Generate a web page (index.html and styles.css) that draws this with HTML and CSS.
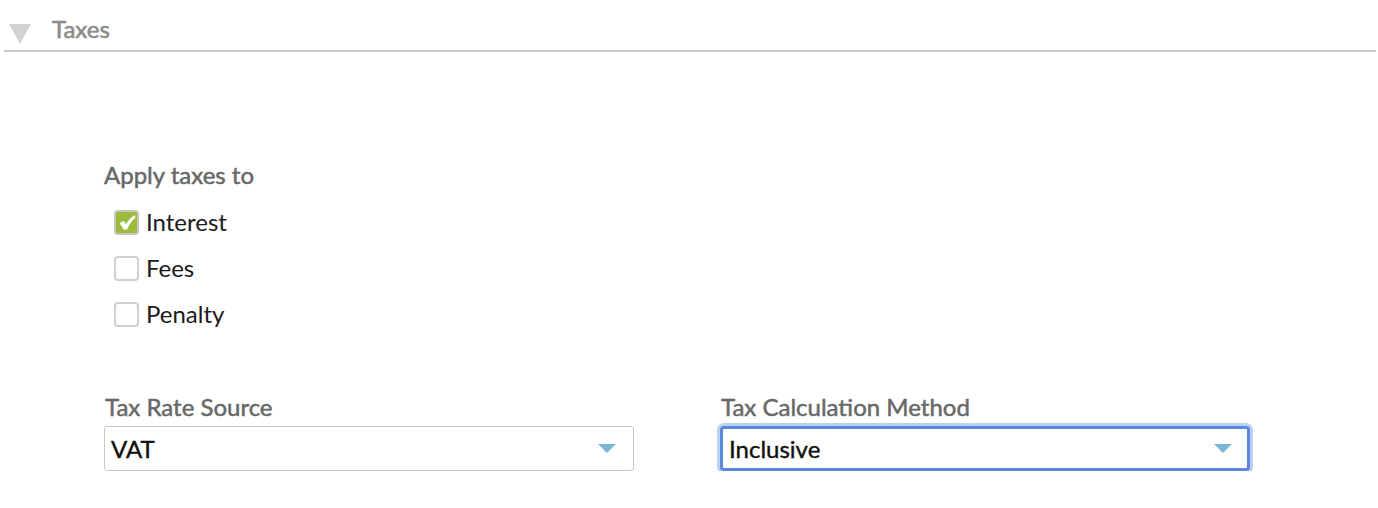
FILE: index.html
```html
<!DOCTYPE html>
<html>
<head>
<meta charset="utf-8">
<link rel="stylesheet" href="styles.css">
</head>
<body>
<div class="section-header">
  <svg class="toggle" width="24" height="22" viewBox="0 0 24 22"><polygon points="1,1 23,1 12,21" fill="#d3d3d3"/></svg>
  <span class="section-title">Taxes</span>
</div>
<div class="section-body">
  <div class="field-label">Apply taxes to</div>
  <div class="checks">
    <label class="check-row">
      <span class="box checked"><svg width="20" height="20" viewBox="0 0 20 20"><path d="M2.5 11 L7 9 L8.8 12.2 Q12 6.5 17.5 3 L18.5 5.5 Q13.5 10 10 17.5 L6.8 17.8 Z" fill="#fff"/></svg></span>
      <span class="check-text">Interest</span>
    </label>
    <label class="check-row">
      <span class="box"></span>
      <span class="check-text">Fees</span>
    </label>
    <label class="check-row">
      <span class="box"></span>
      <span class="check-text">Penalty</span>
    </label>
  </div>
  <div class="selects">
    <div class="select-field">
      <div class="field-label">Tax Rate Source</div>
      <div class="select">
        <span class="select-value">VAT</span>
        <svg class="caret" width="18" height="9" viewBox="0 0 18 9"><polygon points="0,0 18,0 9,9" fill="#7db5d9"/></svg>
      </div>
    </div>
    <div class="select-field">
      <div class="field-label">Tax Calculation Method</div>
      <div class="select focused">
        <span class="select-value">Inclusive</span>
        <svg class="caret" width="18" height="9" viewBox="0 0 18 9"><polygon points="0,0 18,0 9,9" fill="#7db5d9"/></svg>
      </div>
    </div>
  </div>
</div>
</body>
</html>
```

FILE: styles.css
```css
html, body {
  margin: 0;
  padding: 0;
  background: #fff;
}
body {
  font-family: Lato, "Open Sans", sans-serif;
  color: #1a1a1a;
}
.section-header {
  margin: 0 2px 0 4px;
  height: 26px;
  padding: 16px 0 8px 0;
  border-bottom: 2px solid #c9c9c9;
  display: flex;
  align-items: center;
}
.toggle {
  margin-left: 4px;
  margin-top: 10px;
  display: block;
}
.section-title {
  margin-left: 20px;
  font-size: 24px;
  line-height: 26px;
  font-weight: 400;
  color: #8c8c8c;
  -webkit-text-stroke: 0.6px #8c8c8c;
}
.section-body {
  padding: 110px 0 0 104px;
}
.field-label {
  font-size: 24px;
  line-height: 26px;
  color: #686868;
  font-weight: 400;
  -webkit-text-stroke: 0.5px #686868;
}
.checks {
  margin-top: 11px;
  display: flex;
  flex-direction: column;
}
.check-row {
  height: 46px;
  display: flex;
  align-items: center;
  padding-left: 10px;
}
.box {
  box-sizing: border-box;
  width: 25px;
  height: 25px;
  border: 2px solid #cfd1cd;
  border-radius: 4px;
  background: #fff;
  display: flex;
  align-items: center;
  justify-content: center;
}
.box.checked {
  background: #9cbb3d;
  border-color: #c3c7bd;
}
.box svg { display: block; }
.check-text {
  margin-left: 7px;
  font-size: 24px;
  line-height: 26px;
  color: #1a1a1a;
}
.selects {
  margin-top: 57px;
  display: flex;
  gap: 86px;
}
.select-field {
  width: 530px;
}
.select-field .field-label {
  padding-left: 1px;
}
.select {
  box-sizing: border-box;
  margin-top: 6px;
  height: 45px;
  border: 1px solid #c8c8c8;
  border-radius: 3px;
  display: flex;
  align-items: center;
  justify-content: space-between;
  padding: 0 17px 0 6px;
  background: #fff;
}
.select.focused {
  border: 3px solid #5a88e0;
  border-radius: 4px;
  padding: 0 15px 0 6px;
  box-shadow: 0 0 0 3px #bcd1f6;
}
.select-value {
  font-size: 24px;
  line-height: 26px;
  color: #111;
  font-weight: 400;
  -webkit-text-stroke: 0.4px #111;
}
.caret {
  display: block;
}
```
